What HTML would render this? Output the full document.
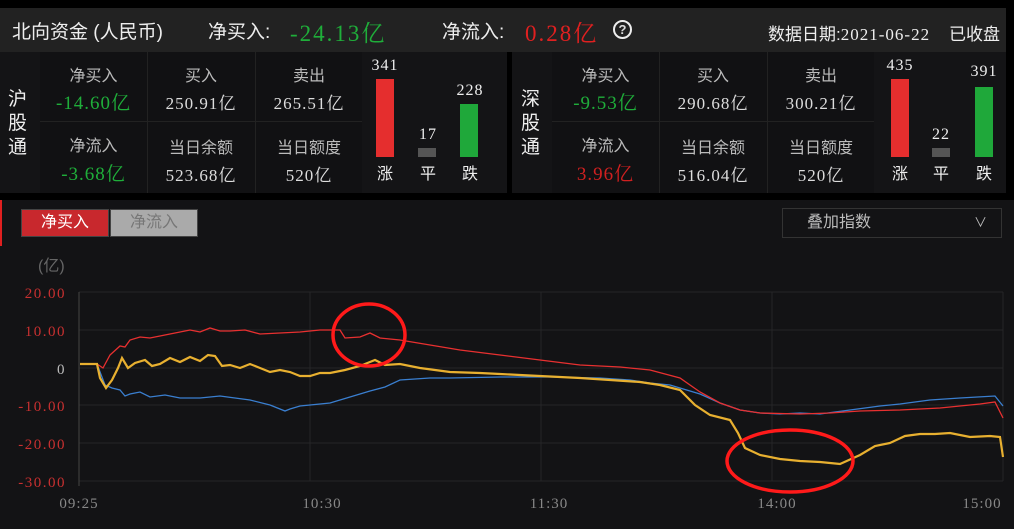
<!DOCTYPE html><html><head><meta charset="utf-8"><style>
body{margin:0;width:1014px;height:529px;background:#000;font-family:"Liberation Serif","Noto Serif CJK SC",serif;color:#ddd;overflow:hidden;position:relative}
.a{position:absolute;white-space:nowrap}
.s{font-family:"Liberation Sans","Noto Sans CJK SC",sans-serif}
.g{color:#1fae3a}.r{color:#e02020}.l{color:#bbb}
.c{text-align:center}
.n{letter-spacing:1px}
</style></head><body>
<div class="a" style="left:0;top:8px;width:1006px;height:44px;background:#222"></div>
<div class="a s" style="left:12px;top:17px;font-size:19px;color:#eee">北向资金 (人民币)</div>
<div class="a s" style="left:208px;top:17px;font-size:19px;color:#eee">净买入:</div>
<div class="a g" style="left:290px;top:15px;font-size:23px;letter-spacing:2px">-24.13亿</div>
<div class="a s" style="left:442px;top:17px;font-size:19px;color:#eee">净流入:</div>
<div class="a r" style="left:525px;top:15px;font-size:23px;letter-spacing:2px">0.28亿</div>
<div class="a c" style="left:613px;top:20px;width:15px;height:15px;border:2px solid #eee;border-radius:50%;font-size:13px;line-height:15px;font-weight:bold;font-family:'Liberation Sans'">?</div>
<div class="a" style="right:14px;top:20px;font-size:17px;color:#eee"><span class="s">数据日期:</span><span style="letter-spacing:1px">2021-06-22</span><span class="s">&nbsp;&nbsp;&nbsp; 已收盘</span></div>

<div class="a" style="left:0;top:52px;width:507px;height:141px;background:#141416"></div>
<div class="a" style="left:512px;top:52px;width:494px;height:141px;background:#141416"></div>
<div class="a" style="left:40px;top:52px;width:322px;height:141px;background:#111113"></div>
<div class="a" style="left:552px;top:52px;width:322px;height:141px;background:#111113"></div>

<div class="a s" style="left:8px;top:88px;font-size:19px;line-height:24px;width:22px;color:#eee">沪<br>股<br>通</div>
<div class="a s l c" style="left:40px;top:62px;width:107px;font-size:16px">净买入</div>
<div class="a g c n" style="left:40px;top:88px;width:107px;font-size:19px">-14.60亿</div>
<div class="a s l c" style="left:40px;top:132px;width:107px;font-size:16px">净流入</div>
<div class="a g c n" style="left:40px;top:159px;width:107px;font-size:19px">-3.68亿</div>
<div class="a s l c" style="left:147px;top:62px;width:108px;font-size:16px">买入</div>
<div class="a c n" style="left:147px;top:89px;width:108px;font-size:17px">250.91亿</div>
<div class="a s l c" style="left:147px;top:134px;width:108px;font-size:16px">当日余额</div>
<div class="a c n" style="left:147px;top:161px;width:108px;font-size:17px">523.68亿</div>
<div class="a s l c" style="left:255px;top:62px;width:108px;font-size:16px">卖出</div>
<div class="a c n" style="left:255px;top:89px;width:108px;font-size:17px">265.51亿</div>
<div class="a s l c" style="left:255px;top:134px;width:108px;font-size:16px">当日额度</div>
<div class="a c n" style="left:255px;top:161px;width:108px;font-size:17px">520亿</div>
<div class="a" style="left:147px;top:52px;width:1px;height:141px;background:#222"></div>
<div class="a" style="left:255px;top:52px;width:1px;height:141px;background:#222"></div>
<div class="a" style="left:40px;top:121px;width:322px;height:1px;background:#222"></div>
<div class="a c n" style="left:370px;top:57px;width:30px;font-size:16px;color:#eee">341</div>
<div class="a" style="left:376px;top:79px;width:18px;height:78px;background:#e52e2e"></div>
<div class="a s c" style="left:370px;top:160px;width:30px;font-size:16px;color:#eee">涨</div>
<div class="a c n" style="left:413px;top:126px;width:30px;font-size:16px;color:#eee">17</div>
<div class="a" style="left:418px;top:148px;width:18px;height:9px;background:#555"></div>
<div class="a s c" style="left:413px;top:160px;width:30px;font-size:16px;color:#eee">平</div>
<div class="a c n" style="left:455px;top:82px;width:30px;font-size:16px;color:#eee">228</div>
<div class="a" style="left:460px;top:104px;width:18px;height:53px;background:#1fa83a"></div>
<div class="a s c" style="left:455px;top:160px;width:30px;font-size:16px;color:#eee">跌</div>

<div class="a s" style="left:521px;top:88px;font-size:19px;line-height:24px;width:22px;color:#eee">深<br>股<br>通</div>
<div class="a s l c" style="left:552px;top:62px;width:107px;font-size:16px">净买入</div>
<div class="a g c n" style="left:552px;top:88px;width:107px;font-size:19px">-9.53亿</div>
<div class="a s l c" style="left:552px;top:132px;width:107px;font-size:16px">净流入</div>
<div class="a c n" style="left:552px;top:159px;width:107px;font-size:19px;color:#d02020">3.96亿</div>
<div class="a s l c" style="left:659px;top:62px;width:108px;font-size:16px">买入</div>
<div class="a c n" style="left:659px;top:89px;width:108px;font-size:17px">290.68亿</div>
<div class="a s l c" style="left:659px;top:134px;width:108px;font-size:16px">当日余额</div>
<div class="a c n" style="left:659px;top:161px;width:108px;font-size:17px">516.04亿</div>
<div class="a s l c" style="left:767px;top:62px;width:108px;font-size:16px">卖出</div>
<div class="a c n" style="left:767px;top:89px;width:108px;font-size:17px">300.21亿</div>
<div class="a s l c" style="left:767px;top:134px;width:108px;font-size:16px">当日额度</div>
<div class="a c n" style="left:767px;top:161px;width:108px;font-size:17px">520亿</div>
<div class="a" style="left:659px;top:52px;width:1px;height:141px;background:#222"></div>
<div class="a" style="left:767px;top:52px;width:1px;height:141px;background:#222"></div>
<div class="a" style="left:552px;top:121px;width:322px;height:1px;background:#222"></div>
<div class="a c n" style="left:885px;top:57px;width:30px;font-size:16px;color:#eee">435</div>
<div class="a" style="left:891px;top:79px;width:18px;height:78px;background:#e52e2e"></div>
<div class="a s c" style="left:885px;top:160px;width:30px;font-size:16px;color:#eee">涨</div>
<div class="a c n" style="left:926px;top:126px;width:30px;font-size:16px;color:#eee">22</div>
<div class="a" style="left:932px;top:148px;width:18px;height:9px;background:#555"></div>
<div class="a s c" style="left:926px;top:160px;width:30px;font-size:16px;color:#eee">平</div>
<div class="a c n" style="left:969px;top:63px;width:30px;font-size:16px;color:#eee">391</div>
<div class="a" style="left:975px;top:87px;width:18px;height:70px;background:#1fa83a"></div>
<div class="a s c" style="left:969px;top:160px;width:30px;font-size:16px;color:#eee">跌</div>

<div class="a" style="left:0;top:200px;width:1014px;height:329px;background:#131315"></div>
<div class="a" style="left:0;top:200px;width:2px;height:46px;background:#e02020"></div>
<div class="a s c" style="left:21px;top:209px;width:86px;height:26px;background:#c8282d;border:1px solid #444;color:#fff;font-size:16px;line-height:26px">净买入</div>
<div class="a s c" style="left:110px;top:209px;width:86px;height:26px;background:#aaa;border:1px solid #444;color:#777;font-size:16px;line-height:26px">净流入</div>
<div class="a s" style="left:782px;top:208px;width:218px;height:28px;border:1px solid #333;color:#bbb;font-size:16px;line-height:28px"><span style="margin-left:24px">叠加指数</span><span style="position:absolute;right:14px;top:0;font-size:13px">∨</span></div>
<div class="a s" style="left:38px;top:252px;font-size:16px;color:#666">(亿)</div>
<svg class="a" style="left:0;top:250px" width="1014" height="279">
<g stroke="#262628" stroke-width="1">
<line x1="79" y1="42" x2="1003" y2="42"/><line x1="79" y1="80" x2="1003" y2="80"/><line x1="79" y1="118" x2="1003" y2="118"/><line x1="79" y1="155" x2="1003" y2="155"/><line x1="79" y1="193" x2="1003" y2="193"/><line x1="79" y1="231" x2="1003" y2="231"/>
<line x1="310" y1="42" x2="310" y2="231"/><line x1="541" y1="42" x2="541" y2="231"/><line x1="772" y1="42" x2="772" y2="231"/><line x1="1003" y1="42" x2="1003" y2="231"/>
</g>
<line x1="79" y1="42" x2="79" y2="236" stroke="#444"/>
<g font-family="Liberation Serif" font-size="15" fill="#c83030" text-anchor="end" letter-spacing="1.5">
<text x="66" y="48">20.00</text><text x="66" y="86">10.00</text><text x="66" y="124" fill="#bbb">0</text><text x="66" y="161">-10.00</text><text x="66" y="199">-20.00</text><text x="66" y="237">-30.00</text></g>
<g font-family="Liberation Serif" font-size="15" fill="#888" text-anchor="middle" letter-spacing="1">
<text x="79" y="258">09:25</text><text x="322" y="258">10:30</text><text x="549" y="258">11:30</text><text x="777" y="258">14:00</text><text x="982" y="258">15:00</text></g>
<g fill="none" stroke-width="1.3" transform="translate(0,-250)">
<polyline stroke="#3a7fd0" points="80,364 97,364 105,385 112,388 120,390 125,396 130,394 140,392 150,397 165,395 180,398 200,398 220,396 250,400 270,405 285,411 290,409 300,406 310,405 330,403 350,397 370,391 385,387 400,380 430,378 450,378 500,377 550,377 600,378 630,380 650,383 670,385 700,394 720,403 740,410 760,413 780,414 800,413 820,414 850,410 880,406 900,404 930,400 960,398 995,396 1003,406"/>
<polyline stroke="#e83030" points="80,364 97,364 103,368 110,355 120,346 125,347 130,340 140,337 150,338 170,334 190,330 200,332 210,328 220,331 230,331 245,330 260,334 280,333 300,332 320,330 330,330 340,330 345,338 360,337 370,333 380,338 400,340 430,345 460,350 500,355 540,360 580,365 620,367 650,370 680,378 700,392 720,403 740,410 760,413 800,414 830,413 860,411 900,410 940,408 980,404 995,402 1003,418"/>
<polyline stroke="#e8b030" stroke-width="2.2" points="80,364 97,364 100,378 106,388 112,380 118,368 122,358 128,368 135,363 145,360 152,366 160,364 170,358 180,362 190,357 200,361 208,355 215,356 222,366 230,365 240,368 250,364 260,368 270,372 280,370 290,372 300,376 310,376 320,373 330,373 345,370 360,366 375,360 385,365 400,364 420,368 450,372 480,373 500,374 520,375 540,376 580,378 610,380 640,382 660,385 680,390 695,405 710,415 730,420 738,433 745,448 760,455 780,459 800,461 820,462 840,464 860,455 875,446 890,443 905,436 920,434 935,434 950,433 970,437 990,436 1000,437 1003,457"/>
<ellipse cx="369" cy="335" rx="36" ry="31" stroke="#ff1a1a" stroke-width="3.5"/>
<ellipse cx="790" cy="461" rx="63" ry="31" stroke="#ff1a1a" stroke-width="3.5"/>
</g>
</svg>
</body></html>
